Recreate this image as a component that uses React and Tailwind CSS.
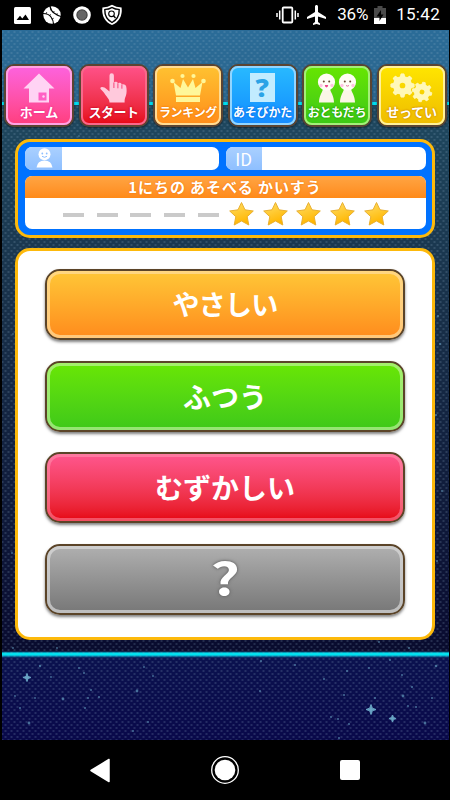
import React from "react";

const font = "font-['Noto_Sans_CJK_JP',sans-serif]";

const HomeIcon = () => (
  <svg width="32" height="30" viewBox="0 0 32 30">
    <path d="M16 0.5 31.5 15.5H26V29.5H6V15.5H0.5Z" fill="#ffd3f4" />
    <path d="M15.500 19.500h8v8h-8Z" fill="#ff5fc4" />
    <circle cx="20.500" cy="23.500" r="1.200" fill="#ffd3f4" />
  </svg>
);

const HandIcon = () => (
  <svg width="28" height="30" viewBox="0 0 28 30">
    <path
      d="M9.500 2.500a2.200 2.200 0 0 1 4.400 0V9.500c.8-1.200 3.600-1 4 .8.800-.9 3.500-.7 4 1.200 1-.8 3.800-.3 4.300 2 .6 3 .7 6.500-.4 9.500-.7 1.800-1.200 3-1.200 5v1.500H9.500c0-4-3.500-6-5-9C3.500 18.500.3 16.500.3 15c.8-1.700 4.500-.8 6.200 1.100l3 2.400Z"
      fill="#ffc9dc"
    />
    <path d="M13.900 9.500v5.500M17.900 10.300v5M21.900 11.500v4.200" stroke="#f8447a" strokeWidth="1" />
  </svg>
);

const CrownIcon = () => (
  <svg width="36" height="30" viewBox="0 0 36 30">
    <g fill="#fff799">
      <path d="M3.500 9 10.500 15 13 6 18 14.500 23 6 25.500 15 32.500 9 30 22.500H6Z" />
      <path d="M6 24H30V29H6Z" />
      <circle cx="2.500" cy="8" r="2.300" />
      <circle cx="12.500" cy="3" r="2.100" />
      <circle cx="23.500" cy="3" r="2.100" />
      <circle cx="33.500" cy="8" r="2.300" />
    </g>
  </svg>
);

const HelpIcon = () => (
  <div className="flex h-[29px] w-[25px] items-center justify-center bg-[#c2ecff] font-['Open_Sans'] text-[24px] leading-none font-extrabold text-[#2ba3e6]">
    <span className="scale-x-110">?</span>
  </div>
);

const FriendsIcon = () => (
  <svg width="40" height="30" viewBox="0 0 40 30">
    {[0, 21].map((x) => (
      <g key={x} transform={`translate(${x} 0)`}>
        <path d="M2 29.500C2 23 5 20 6 16h7C14 20 17 23 17 29.500Z" fill="#fbf6e6" />
        <circle cx="9.500" cy="9" r="8.600" fill="#fffdf5" />
        <circle cx="4" cy="12.500" r="1.700" fill="#ffc3e0" />
        <circle cx="15" cy="12.500" r="1.700" fill="#ffc3e0" />
        <circle cx="6.800" cy="8.500" r="1" fill="#68482e" />
        <circle cx="12.200" cy="8.500" r="1" fill="#68482e" />
        {x === 0 ? (
          <path d="M7.800 12h3.400q-.2 2.400-1.700 2.400t-1.700-2.400Z" fill="#f0448c" />
        ) : (
          <path d="M8 12.500q1.500 1.300 3 0" fill="none" stroke="#e0609a" strokeWidth="0.900" />
        )}
      </g>
    ))}
  </svg>
);

const teeth = [0, 45, 90, 135, 180, 225, 270, 315];

const Gear = ({ x, y, scale, turn }) => (
  <g transform={`translate(${x} ${y}) scale(${scale}) rotate(${turn})`} fill="#fff8b8">
    {teeth.map((a) => (
      <path key={a} d="M-2.300-8-1.500-11.800H1.500L2.300-8Z" stroke="#fff8b8" strokeLinejoin="round" transform={`rotate(${a})`} />
    ))}
    <circle r="6.300" fill="none" stroke="#fff8b8" strokeWidth="6.800" />
  </g>
);

const GearsIcon = () => (
  <svg width="43" height="30" viewBox="0 0 43 30">
    <Gear x={12.5} y={12.5} scale={0.98} turn={0} />
    <Gear x={32} y={19} scale={0.83} turn={12} />
  </svg>
);

const menu = [
  { label: "ホーム", icon: <HomeIcon />, bg: "from-[#fd62df] to-[#ff3d7d]", ring: "border-[#ffa3e4]", glow: "[text-shadow:0_0_2px_#f0288c,0_0_2px_#f0288c]", text: "text-[13px]" },
  { label: "スタート", icon: <HandIcon />, bg: "from-[#ff5189] to-[#e6000d]", ring: "border-[#f8688b]", glow: "[text-shadow:0_0_2px_#c8001e,0_0_2px_#c8001e]", text: "text-[13px] tracking-[-0.500px]" },
  { label: "ランキング", icon: <CrownIcon />, bg: "from-[#ffc231] to-[#ff8c19]", ring: "border-[#ffdc94]", glow: "[text-shadow:0_0_2px_#f07800,0_0_2px_#f07800]", text: "text-[12px] tracking-[-0.300px]" },
  { label: "あそびかた", icon: <HelpIcon />, bg: "from-[#29baff] to-[#168bff]", ring: "border-[#92d5ff]", glow: "[text-shadow:0_0_2px_#006ee6,0_0_2px_#006ee6]", text: "text-[12px] tracking-[-0.200px]" },
  { label: "おともだち", icon: <FriendsIcon />, bg: "from-[#67e600] to-[#3bc716]", ring: "border-[#a4ef7a]", glow: "[text-shadow:0_0_2px_#1ea000,0_0_2px_#1ea000]", text: "text-[12px] tracking-[-0.300px]" },
  { label: "せってい", icon: <GearsIcon />, bg: "from-[#ffe600] to-[#eebb00]", ring: "border-[#fff19a]", glow: "[text-shadow:0_0_2px_#d28c00,0_0_2px_#d28c00]", text: "text-[13px] tracking-[-0.200px]" },
];

const levels = [
  { label: "やさしい", bg: "from-[#ffc737] to-[#ff8b1c]", ring: "border-[#ffdc9a]/75", text: "text-[27px] tracking-[-0.8px]", glow: "" },
  { label: "ふつう", bg: "from-[#69e704] to-[#3ec819]", ring: "border-[#c5f5a4]/65", text: "text-[28px]", glow: "" },
  { label: "むずかしい", bg: "from-[#ff568e] to-[#e6000b]", ring: "border-[#ff9ab4]/50", text: "text-[28px]", glow: "" },
  { label: "?", bg: "from-[#b0b0b0] to-[#777777]", ring: "border-[#dcdcdc]/70", text: "text-[44px]", glow: "[text-shadow:0_0_3px_#666,0_0_2px_#666]" },
];

// [x, y, radius] of the specks in the night sky
const specks = [
  [37, 39, 0.8], [46, 49, 0.8], [105, 50, 1], [177, 54, 0.7], [26, 57, 0.7], [263, 41, 0.8], [438, 38, 0.8], [370, 53, 0.8],
  [78, 136, 0.8], [12, 334, 0.8], [437, 316, 1], [439, 344, 1], [435, 415, 1], [441, 491, 0.9], [11, 553, 0.9], [436, 561, 1], [14, 207, 0.8],
  [39, 666, 1.2], [78, 668, 1], [83, 673, 1], [50, 677, 0.9], [90, 690, 1], [98, 697, 1], [87, 698, 1], [62, 699, 1.4], [34, 698, 0.9],
  [14, 696, 0.9], [19, 708, 1], [28, 723, 1.4], [84, 708, 1], [136, 691, 1.4], [152, 676, 0.9], [143, 667, 0.9], [147, 722, 1], [132, 731, 1],
  [260, 661, 1], [294, 665, 1], [323, 679, 1], [346, 671, 1], [368, 668, 0.9], [389, 660, 1], [435, 666, 1.3], [401, 675, 1], [411, 687, 1.1],
  [259, 691, 1], [343, 695, 1], [374, 698, 1], [402, 696, 1.4], [431, 698, 1], [407, 706, 0.9], [415, 707, 1], [330, 717, 1], [337, 719, 1],
  [348, 724, 1], [424, 723, 1.4], [338, 738, 1], [12, 648, 0.9], [56, 648, 0.9], [408, 648, 1], [378, 642, 0.9],
];

const Sky = () => (
  <svg className="absolute inset-0" width="447" height="710" viewBox="1.5 30 447 710">
    <defs>
      <pattern id="dots" width="6" height="6" patternUnits="userSpaceOnUse">
        <path d="M1 1h2v2h-2zM4 4h2v2h-2z" fill="#8fb0c8" opacity="0.2" />
      </pattern>
    </defs>
    <rect x="1" y="30" width="448" height="710" fill="url(#dots)" />
    <g fill="#69a4c4">
      {specks.map(([x, y, r], i) => (
        <circle key={i} cx={x + 0.5} cy={y} r={r} opacity="0.65" />
      ))}
      <path d="M26.500 673.500l1 3 3 1-3 1-1 3-1-3-3-1 3-1Z" stroke="#69a4c4" />
      <path d="M370.500 704.500l1.300 3.700 3.700 1.300-3.700 1.300-1.300 3.700-1.300-3.700-3.700-1.300 3.700-1.300Z" stroke="#69a4c4" />
      <path d="M392 715l1 2.500 2.500 1-2.500 1-1 2.500-1-2.500-2.500-1 2.500-1Z" stroke="#69a4c4" />
    </g>
  </svg>
);

const StatusBar = () => (
  <div className="flex h-[30px] items-center justify-between bg-black pr-[10px] pl-[14px]">
    <div className="flex items-center gap-3">
      <svg width="17" height="17" viewBox="0 0 17 17">
        <rect width="17" height="17" rx="1.500" fill="#fff" />
        <path d="M2.500 13 6 8.700l2.300 2.800 3.200-4.100L15 13Z" fill="#000" />
      </svg>
      <svg width="18" height="18" viewBox="0 0 18 18">
        <circle cx="9" cy="9" r="8.700" fill="#fff" />
        <path d="M7 0Q7.500 4.500 11 7T18 10.500M0 7.500Q5.500 7.500 8 11T10.500 18" fill="none" stroke="#000" strokeWidth="1.200" />
        <path d="M7 4 9 3M10 6.500l1.500-1.500M13.500 9.200l.8-2M3 8l.8-2M6.500 9.800l1.300-1.600M8.800 13l2-.8" stroke="#000" strokeWidth="0.700" />
      </svg>
      <svg width="18" height="18" viewBox="0 0 18 18">
        <circle cx="9" cy="9" r="8.800" fill="#fff" />
        <circle cx="9" cy="9" r="5.100" fill="#666" stroke="#444" strokeWidth="1.200" />
      </svg>
      <svg className="-ml-[2px]" width="22" height="22" viewBox="0 0 22 22">
        <path d="M11 .8Q15 3.400 20.600 3.400 22 16 11 21 0 16 1.400 3.400 7 3.400 11 .8Z" fill="#fff" />
        <path d="M11 2.700Q14.500 4.800 18.900 4.900 19.400 14.800 11 19.200 2.600 14.800 3.100 4.900 7.500 4.800 11 2.700Z" fill="#000" />
        <path d="M11 4.200Q14 6 17.500 6.100 17.700 14 11 17.700 4.300 14 4.500 6.100 8 6 11 4.200Z" fill="#fff" />
        <circle cx="10.500" cy="9.800" r="2.800" fill="none" stroke="#000" strokeWidth="1.100" />
        <path d="M12.500 11.800 14.500 14" stroke="#000" strokeWidth="1.400" />
      </svg>
    </div>
    <div className="flex items-center font-['Roboto',sans-serif] text-[17px] text-white">
      <svg width="23" height="18" viewBox="0 0 23 18">
        <path d="M1 7v4M3.700 4.500v9M19.300 4.500v9M22 7v4" stroke="#fff" strokeWidth="1.500" />
        <rect x="6.700" y="1.500" width="9.600" height="15" rx="1" fill="none" stroke="#fff" strokeWidth="1.800" />
      </svg>
      <svg className="ml-[8px]" width="20" height="20" viewBox="2 2 20 20">
        <path d="M21 16v-2l-8-5V3.500c0-.83-.67-1.500-1.500-1.500S10 2.670 10 3.500V9l-8 5v2l8-2.500V19l-2 1.500V22l3.500-1 3.500 1v-1.500L13 19v-5.500Z" fill="#fff" />
      </svg>
      <span className="ml-[10px] w-[33px] tracking-[-0.100px]">36%</span>
      <svg className="ml-[4px]" width="12" height="18" viewBox="0 0 12 18">
        <path d="M3.500 0h5v2H12v16H0V2h3.500Z" fill="#4a4a4a" />
        <path d="M0 12h12v6H0Z" fill="#fff" />
        <path d="M7 4 2.500 10.500H5.500V15L9.500 8.500H7Z" fill="#000" />
      </svg>
      <span className="ml-[10px] tracking-[0.300px]">15:42</span>
    </div>
  </div>
);

const MenuButton = ({ item }) => (
  <button className={`h-[63px] w-[70px] rounded-[10px] border-2 border-[#5b4432] bg-gradient-to-b shadow-[0_1px_2px_rgba(0,0,0,0.5)] ${item.bg}`}>
    <div className={`flex h-full flex-col items-center rounded-[8px] border-2 pt-[4px] ${item.ring}`}>
      <div className="flex h-[31px] items-center">{item.icon}</div>
      <span className={`mt-[2px] leading-[14px] font-bold whitespace-nowrap text-white ${item.text} ${item.glow}`}>
        {item.label}
      </span>
    </div>
  </button>
);

const Star = () => (
  <svg width="27" height="26" viewBox="0 0 27 26">
    <path
      d="M13.500 1.500 17 8.800 25.300 10 19.200 15.700 20.800 24 13.500 20 6.200 24 7.800 15.700 1.700 10 10 8.800Z"
      fill="url(#star)"
      stroke="#e9b031"
      strokeWidth="1"
      strokeLinejoin="round"
    />
    <defs>
      <linearGradient id="star" x2="0.4" y2="1">
        <stop offset="0" stopColor="#ffdf68" />
        <stop offset="1" stopColor="#ffb600" />
      </linearGradient>
    </defs>
  </svg>
);

const PlayerPanel = () => (
  <div className="mx-auto mt-[12px] h-[99px] w-[420px] rounded-[15px] border-3 border-[#fdb90b] bg-[#0072ff] px-[6.500px] pt-[5px]">
    <div className="flex h-[23px] justify-between">
      <div className="flex w-[194px] overflow-hidden rounded-[7px] bg-white">
        <div className="flex w-[37px] items-end justify-center bg-gradient-to-b from-[#aad0ff] to-[#8ebfff] pb-[2px] pl-[3px]">
          <svg width="17" height="20" viewBox="0 0 17 20">
            <circle cx="8.500" cy="6.200" r="6" fill="#fff" />
            <path d="M.5 19.500Q1.500 12.500 8.500 12.500T16.500 19.500Z" fill="#fff" />
            <circle cx="6.300" cy="5.500" r=".9" fill="#8ebfff" />
            <circle cx="10.700" cy="5.500" r=".9" fill="#8ebfff" />
            <path d="M6 8.300q2.500 2 5 0" fill="none" stroke="#8ebfff" />
          </svg>
        </div>
      </div>
      <div className="flex w-[200px] overflow-hidden rounded-[7px] bg-white">
        <div className="flex w-[36px] items-center justify-center bg-gradient-to-b from-[#aad0ff] to-[#8ebfff] text-[17px] text-white">
          ID
        </div>
      </div>
    </div>
    <div className="mt-[6px] h-[53px] overflow-hidden rounded-[7px] bg-white">
      <div className="h-[22px] bg-gradient-to-b from-[#ffa542] to-[#ff8a17] text-center text-[15px] leading-[21px] font-bold tracking-[0.900px] text-white [text-shadow:0_0_2px_#f07000]">
        1にちの あそべる かいすう
      </div>
      <div className="mx-auto grid h-[31px] w-[336px] grid-cols-10 place-items-center">
        {[0, 1, 2, 3, 4].map((i) => (
          <div key={i} className="mt-[2px] h-[4px] w-[21px] bg-[#cacaca]" />
        ))}
        {[0, 1, 2, 3, 4].map((i) => (
          <Star key={i} />
        ))}
      </div>
    </div>
  </div>
);

const LevelButton = ({ level }) => (
  <button className={`h-[71px] w-[360px] rounded-[15px] border-2 border-[#5b4428] bg-gradient-to-b shadow-[0_2px_3px_rgba(0,0,0,0.5)] ${level.bg}`}>
    <div className={`flex h-full items-center justify-center rounded-[13px] border-3 pb-[1px] font-bold text-white ${level.ring} ${level.text} ${level.glow}`}>
      {level.label === "?" ? <span className="-mt-[6px] scale-x-130">{level.label}</span> : level.label}
    </div>
  </button>
);

const App = () => {
  return (
    <div className={`flex h-[800px] w-[450px] flex-col bg-black ${font}`}>
      <StatusBar />

      {/* Game screen */}
      <div className="relative mx-auto h-[710px] w-[447px] overflow-hidden bg-[linear-gradient(#2b6c98_0px,#2b658c_72px,#1f4960_75px,#183049_280px,#0a0d32_600px,#090c2e_621px,#0c4c72_622px,#00e2f0_623px,#00e2f0_625px,#0b4378_627px,#0b124f_628px,#09094a_710px)]">
        <Sky />
        <div className="absolute top-[72px] h-[3px] w-full bg-[#00dff0]" />
        <div className="relative flex flex-col">
          <div className="flex justify-between pr-[2px] pl-[2.500px] pt-[34px]">
            {menu.map((item) => (
              <MenuButton key={item.label} item={item} />
            ))}
          </div>
          <PlayerPanel />
          <div className="mx-auto mt-[10px] flex h-[392px] w-[420px] flex-col items-center gap-[20.700px] rounded-[15px] border-3 border-[#fdb90b] bg-white pt-[18px]">
            {levels.map((level) => (
              <LevelButton key={level.label} level={level} />
            ))}
          </div>
        </div>
      </div>

      {/* Android navigation */}
      <div className="flex h-[60px] items-center justify-center gap-[101px] bg-black">
        <svg width="20" height="25" viewBox="0 0 20 25">
          <path d="M19 1.500v22L1 12.500Z" fill="#fff" stroke="#fff" strokeWidth="1.500" strokeLinejoin="round" />
        </svg>
        <svg width="28" height="28" viewBox="0 0 28 28">
          <circle cx="14" cy="14" r="13.300" fill="none" stroke="#fff" strokeWidth="1.300" />
          <circle cx="14" cy="14" r="10.300" fill="#fff" />
        </svg>
        <div className="h-[20px] w-[20px] rounded-[2px] bg-white" />
      </div>
    </div>
  );
};

export default App;
